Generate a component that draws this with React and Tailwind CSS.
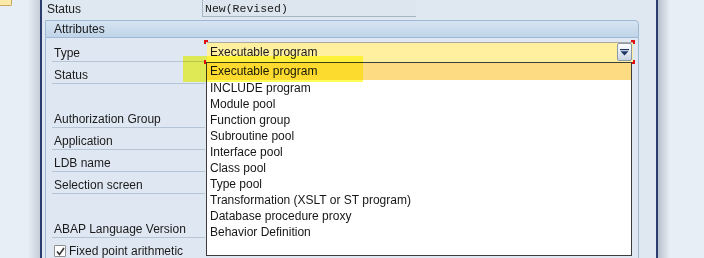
import React from 'react';

const items = [
  'Executable program',
  'INCLUDE program',
  'Module pool',
  'Function group',
  'Subroutine pool',
  'Interface pool',
  'Class pool',
  'Type pool',
  'Transformation (XSLT or ST program)',
  'Database procedure proxy',
  'Behavior Definition',
];

const Row = ({ label, line = true, children }) => (
  <div className="flex h-[22px] items-stretch">
    <div
      className={
        'flex w-[153px] shrink-0 items-center pl-[2px] pt-[4px] ' +
        (line ? 'border-b border-[#b6c5d5]' : 'border-b border-transparent')
      }
    >
      {label}
    </div>
    {children}
  </div>
);

const TypeDropdown = () => (
  <div className="relative ml-[2px] mt-[2px] h-[20px] w-[426px]">
    <div className="flex h-full items-center border-t border-[#a9a9a0] bg-[#fff0a0] pb-[2px] pl-[3px]">
      Executable program
    </div>
    <div className="absolute right-[1px] top-[1px] flex h-[18px] w-[15px] items-center justify-center rounded-[2px] border border-[#8a98aa] bg-gradient-to-b from-[#ffffff] to-[#c9d5e3]">
      <svg width="9" height="7" viewBox="0 0 9 7">
        <rect x="0" y="0" width="9" height="1.2" fill="#1f3566" />
        <path d="M0.5 2.2 H8.5 L4.5 6.5 Z" fill="#1f3566" />
      </svg>
    </div>
    {/* focus corners */}
    <div className="absolute left-[-3px] top-[-2px] h-[4px] w-[4px] border-l-2 border-t-2 border-[#e01010]" />
    <div className="absolute bottom-[-2px] left-[-3px] h-[4px] w-[4px] border-b-2 border-l-2 border-[#e01010]" />
    <div className="absolute right-[-2px] top-[-2px] h-[4px] w-[4px] border-r-2 border-t-2 border-[#e01010]" />
    <div className="absolute bottom-[-2px] right-[-2px] h-[4px] w-[4px] border-b-2 border-r-2 border-[#e01010]" />
    {/* open listbox */}
    <div className="absolute left-[-1px] top-full z-10 h-[194px] w-[426px] border border-[#3c3c3c] bg-white text-[#161616]">
      {items.map((it, i) => (
        <div
          key={it}
          className={'flex h-[16px] items-center pb-[1px] pl-[3px] ' + (i === 0 ? 'h-[17px] bg-[#fcdb82]' : '')}
        >
          {it}
        </div>
      ))}
    </div>
  </div>
);

export default function App() {
  return (
    <div
      className="relative flex h-[258px] w-[704px] overflow-hidden bg-[#e8eef6] text-[12px] leading-none text-[#1a1a1a]"
      style={{ fontFamily: '"Liberation Sans", Arial, sans-serif' }}
    >
      {/* left backdrop with shadow */}
      <div className="w-[40px] shrink-0 bg-[linear-gradient(to_right,#e8eef6_70%,#c4ccd8)]">
        <div className="h-[6px] w-[12px] rounded-br-[2px] border-b border-r border-[#c8a860] bg-[#fde9a8]" />
      </div>
      <div className="w-[2px] shrink-0 bg-[#2b3d6e]" />

      {/* dialog */}
      <div className="w-[614px] shrink-0 bg-[#dfe8f1]">
        <div className="flex h-[17px]">
          <div className="flex w-[160px] items-center pl-[5px] pt-[1px]">Status</div>
          <div
            className="flex w-[214px] items-center border-b border-l border-[#a8b5c3] bg-[#dde6ef] pl-[2px] pt-[2px] text-[11.5px]"
            style={{ fontFamily: '"Liberation Mono", "Courier New", monospace' }}
          >
            New(Revised)
          </div>
        </div>

        <div className="ml-[3px] mt-[3px] w-[594px]">
          <div className="flex h-[18px] items-center rounded-tr-[4px] border border-[#9fb9d4] bg-gradient-to-b from-[#d6e4f2] to-[#c0d4e9] pl-[8px]">
            Attributes
          </div>
          <div className="h-[230px] border-x border-[#9fb9d4] bg-[#dfe8f2] pl-[6px] pt-[2px]">
            <Row label="Type">
              <TypeDropdown />
            </Row>
            <Row label="Status" />
            <Row label="" line={false} />
            <Row label="Authorization Group" />
            <Row label="Application" />
            <Row label="LDB name" />
            <Row label="Selection screen" />
            <Row label="" line={false} />
            <Row label="ABAP Language Version" />
            <div className="flex h-[22px] items-center gap-[3px] pl-[2px] pt-[4px]">
              <div className="flex h-[12px] w-[12px] items-center justify-center rounded-[1px] border border-[#8e8f8f] bg-white">
                <svg width="9" height="9" viewBox="0 0 9 9">
                  <path d="M1 4.5 L3.5 7.5 L8 1" fill="none" stroke="#333" strokeWidth="1.6" />
                </svg>
              </div>
              <span>Fixed point arithmetic</span>
            </div>
          </div>
        </div>
      </div>

      <div className="w-[2px] shrink-0 bg-[#2b3d6e]" />
      <div className="flex-1 bg-[linear-gradient(to_right,#b7c0cc,#e8eef6_12px)]" />

      {/* highlighter annotation */}
      <div className="pointer-events-none absolute left-[183px] top-[56px] z-20 h-[26px] w-[180px] bg-[#ffff00]/65 mix-blend-multiply" />
    </div>
  );
}
